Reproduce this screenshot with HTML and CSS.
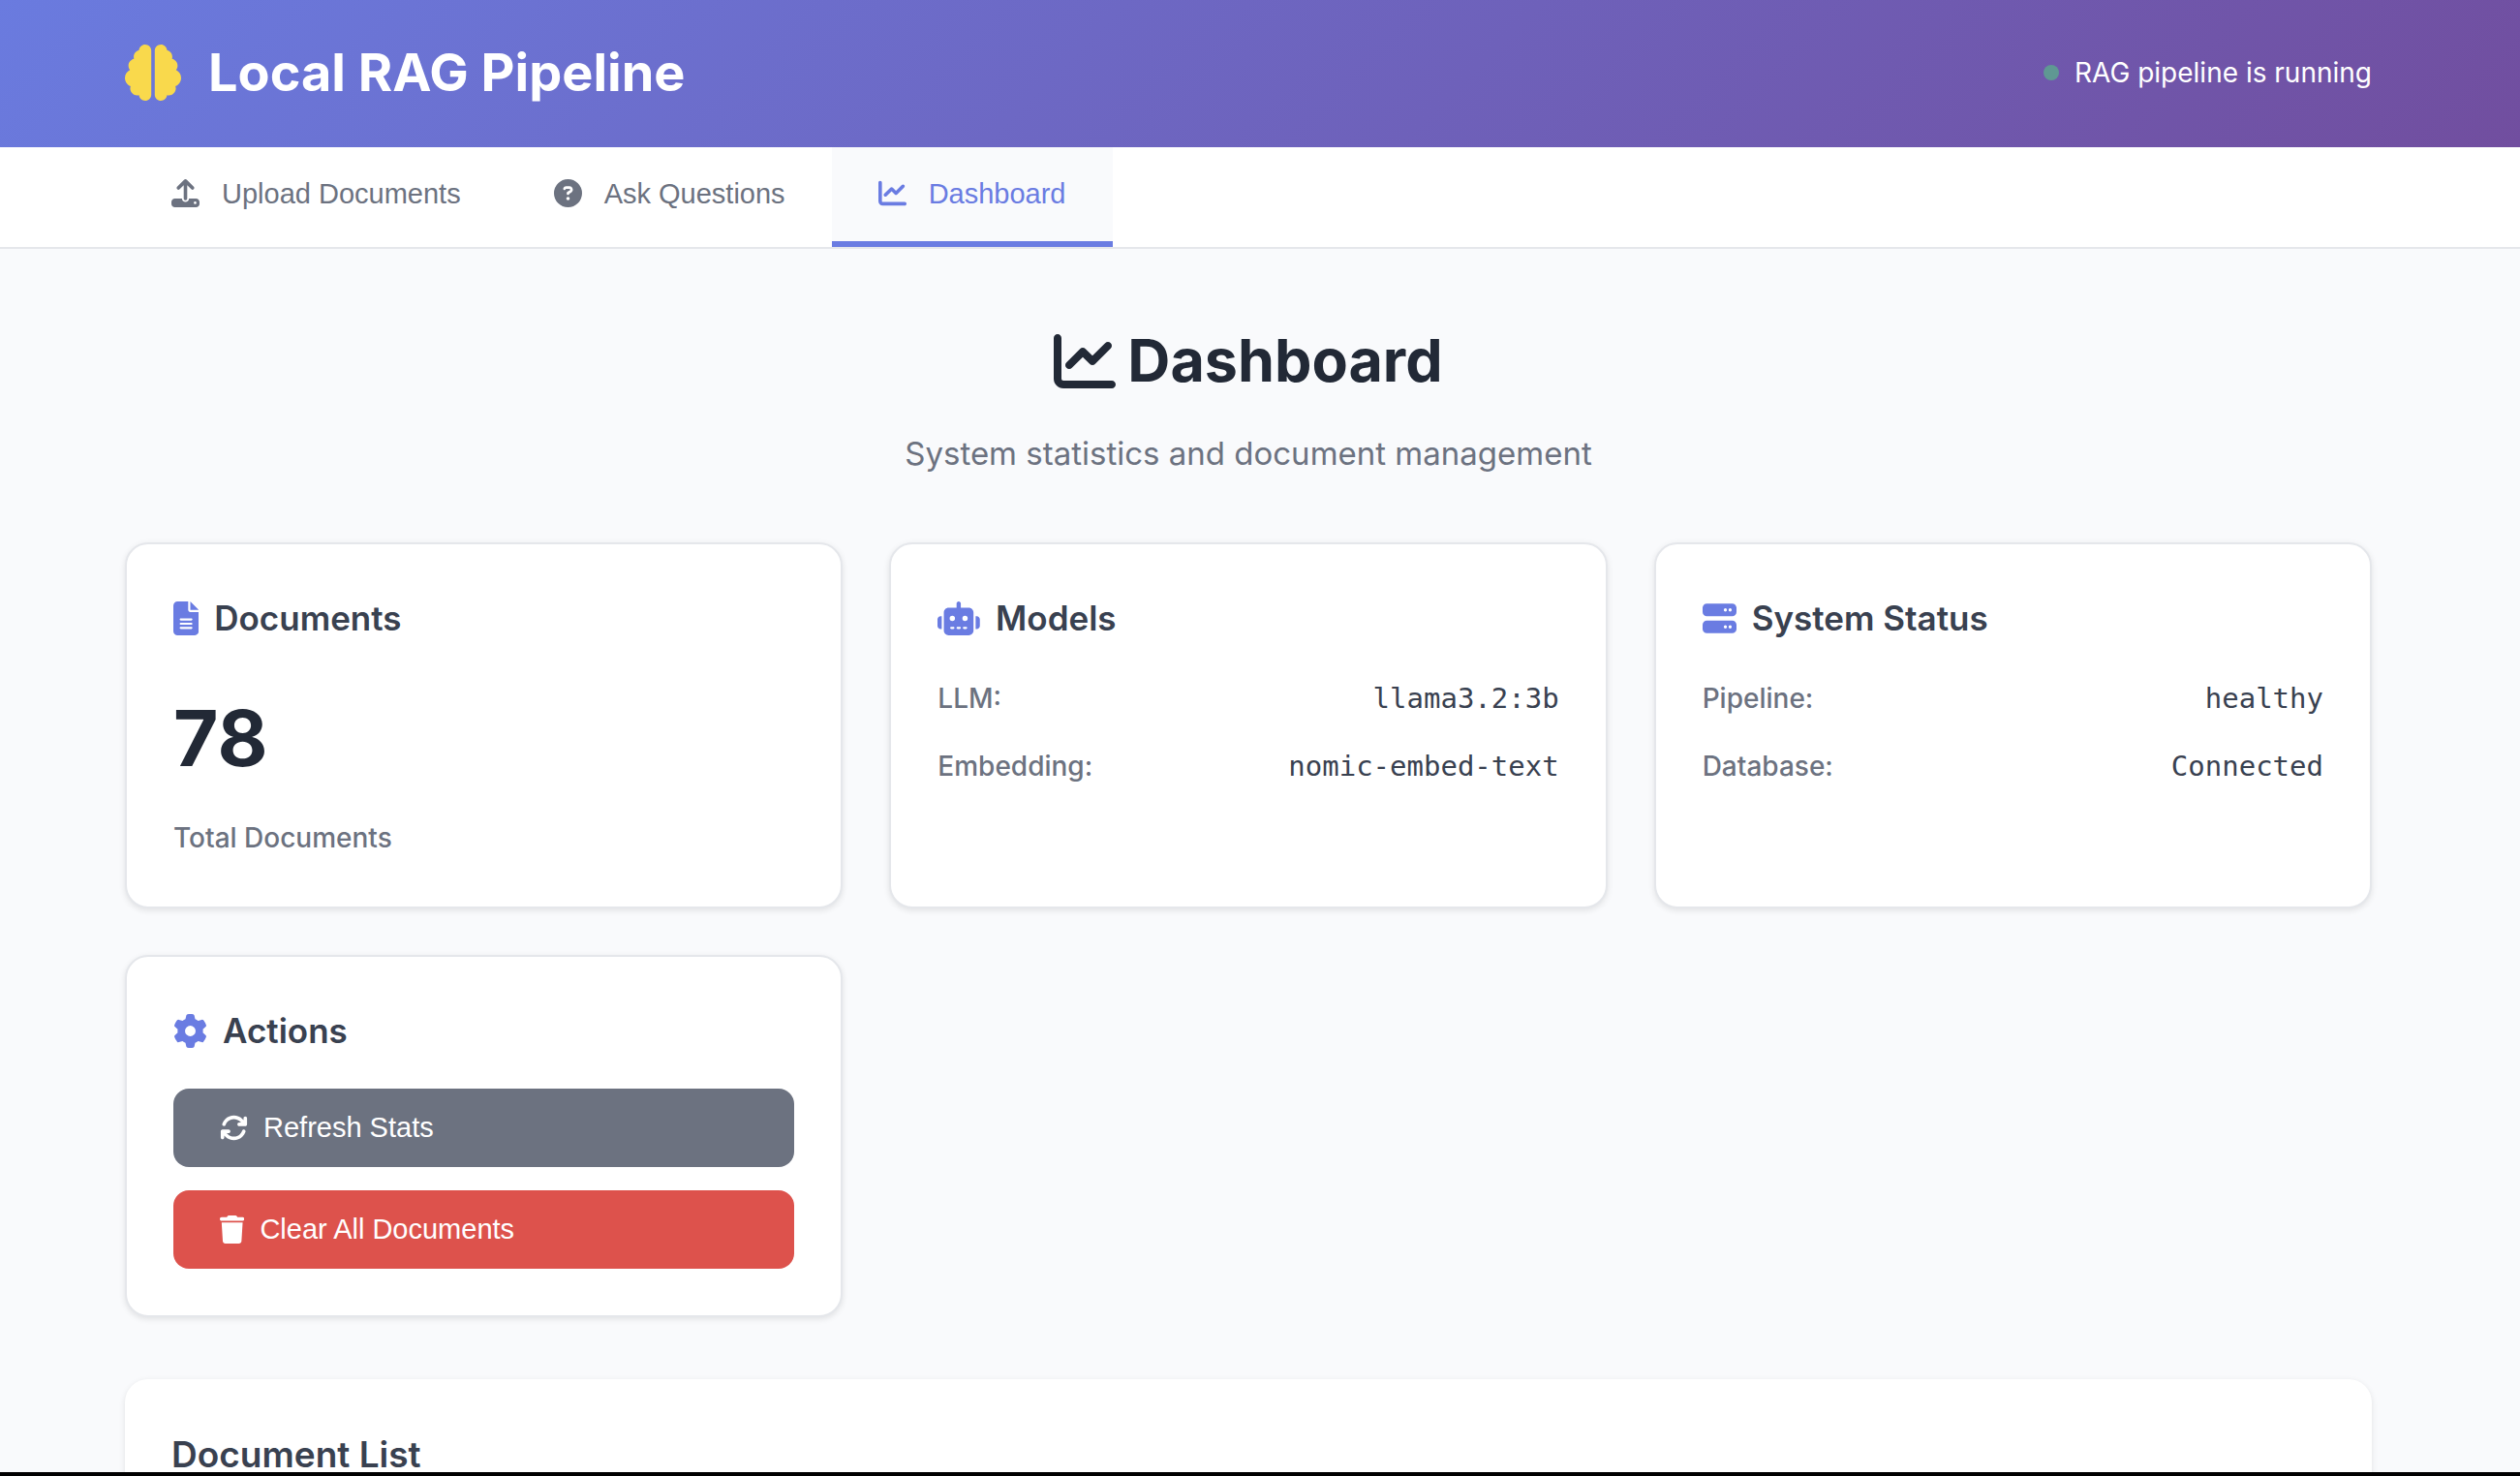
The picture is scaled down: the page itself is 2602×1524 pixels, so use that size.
FILE: index.html
```html
<!DOCTYPE html>
<html lang="en">
<head>
<meta charset="utf-8">
<meta name="viewport" content="width=device-width, initial-scale=1">
<title>Local RAG Pipeline</title>
<link rel="stylesheet" href="styles.css">
</head>
<body>
<div class="app">
  <header class="header">
    <div class="container header-content">
      <div class="logo">
        <svg class="icon" viewBox="0 0 512 512" aria-hidden="true"><path d="M184 0c30.9 0 56 25.1 56 56V456c0 30.9-25.1 56-56 56c-28.9 0-52.7-21.9-55.7-50.1c-5.2 1.4-10.7 2.1-16.3 2.1c-35.3 0-64-28.7-64-64c0-7.4 1.3-14.6 3.6-21.2C21.4 367.4 0 338.2 0 304c0-31.9 18.7-59.5 45.8-72.3C37.1 220.8 32 207 32 192c0-30.7 21.6-56.3 50.4-62.6C80.8 123.9 80 118 80 112c0-29.9 20.6-55.1 48.3-62.1C131.3 21.9 155.1 0 184 0zM328 0c28.9 0 52.6 21.9 55.7 49.9c27.8 7 48.3 32.1 48.3 62.1c0 6-.8 11.9-2.4 17.4c28.8 6.2 50.4 31.9 50.4 62.6c0 15-5.1 28.8-13.8 39.7C493.3 244.5 512 272.1 512 304c0 34.2-21.4 63.4-51.6 74.8c2.3 6.6 3.6 13.8 3.6 21.2c0 35.3-28.7 64-64 64c-5.6 0-11.1-.7-16.3-2.1c-3 28.2-26.8 50.1-55.7 50.1c-30.9 0-56-25.1-56-56V56c0-30.9 25.1-56 56-56z"/></svg>
        <h1 class="logo-text">Local RAG Pipeline</h1>
      </div>
      <div class="status" role="status">
        <span class="status-dot"></span>
        <span>RAG pipeline is running</span>
      </div>
    </div>
  </header>

  <nav class="nav">
    <div class="container nav-content">
      <button class="tab" type="button">
        <svg class="icon" viewBox="0 0 512 512" aria-hidden="true"><path d="M288 109.3V352c0 17.7-14.3 32-32 32s-32-14.3-32-32V109.3l-73.4 73.4c-12.5 12.5-32.8 12.5-45.3 0s-12.5-32.8 0-45.3l128-128c12.5-12.5 32.8-12.5 45.3 0l128 128c12.5 12.5 12.5 32.8 0 45.3s-32.8 12.5-45.3 0L288 109.3zM64 352H192c0 35.3 28.7 64 64 64s64-28.7 64-64H448c35.3 0 64 28.7 64 64v32c0 35.3-28.7 64-64 64H64c-35.3 0-64-28.7-64-64V416c0-35.3 28.7-64 64-64zM432 456a24 24 0 1 0 0-48 24 24 0 1 0 0 48z"/></svg>
        <span>Upload Documents</span>
      </button>
      <button class="tab" type="button">
        <svg class="icon" viewBox="0 0 512 512" aria-hidden="true"><path d="M256 512A256 256 0 1 0 256 0a256 256 0 1 0 0 512zM169.8 165.3c7.9-22.3 29.1-37.3 52.8-37.3h58.3c34.9 0 63.1 28.3 63.1 63.1c0 22.6-12.1 43.5-31.7 54.8L280 264.4c-.2 13-10.9 23.6-24 23.6c-13.3 0-24-10.7-24-24V250.5c0-8.6 4.6-16.5 12.1-20.8l44.3-25.4c4.7-2.7 7.6-7.7 7.6-13.1c0-8.4-6.8-15.1-15.1-15.1H222.6c-3.4 0-6.4 2.1-7.5 5.3l-.4 1.2c-4.4 12.5-18.2 19-30.6 14.6s-19-18.2-14.6-30.6l.4-1.2zM224 352a32 32 0 1 1 64 0 32 32 0 1 1 -64 0z"/></svg>
        <span>Ask Questions</span>
      </button>
      <button class="tab tab-active" type="button">
        <svg class="icon" viewBox="0 0 512 512" aria-hidden="true"><path d="M64 64c0-17.7-14.3-32-32-32S0 46.3 0 64V400c0 44.2 35.8 80 80 80H480c17.7 0 32-14.3 32-32s-14.3-32-32-32H80c-8.8 0-16-7.2-16-16V64zm406.6 86.6c12.5-12.5 12.5-32.8 0-45.3s-32.8-12.5-45.3 0L320 210.7l-57.4-57.4c-12.5-12.5-32.8-12.5-45.3 0l-112 112c-12.5 12.5-12.5 32.8 0 45.3s32.8 12.5 45.3 0L240 221.3l57.4 57.4c12.5 12.5 32.8 12.5 45.3 0l128-128z"/></svg>
        <span>Dashboard</span>
      </button>
    </div>
  </nav>

  <main class="container main">
    <div class="section-header">
      <h2 class="section-title">
        <svg class="icon" viewBox="0 0 512 512" aria-hidden="true"><path d="M64 64c0-17.7-14.3-32-32-32S0 46.3 0 64V400c0 44.2 35.8 80 80 80H480c17.7 0 32-14.3 32-32s-14.3-32-32-32H80c-8.8 0-16-7.2-16-16V64zm406.6 86.6c12.5-12.5 12.5-32.8 0-45.3s-32.8-12.5-45.3 0L320 210.7l-57.4-57.4c-12.5-12.5-32.8-12.5-45.3 0l-112 112c-12.5 12.5-12.5 32.8 0 45.3s32.8 12.5 45.3 0L240 221.3l57.4 57.4c12.5 12.5 32.8 12.5 45.3 0l128-128z"/></svg>
        <span>Dashboard</span>
      </h2>
      <p class="section-subtitle">System statistics and document management</p>
    </div>

    <div class="cards">
      <section class="card">
        <h3 class="card-title">
          <svg class="icon" viewBox="0 0 384 512" aria-hidden="true"><path d="M64 0C28.7 0 0 28.7 0 64V448c0 35.3 28.7 64 64 64H320c35.3 0 64-28.7 64-64V160H256c-17.7 0-32-14.3-32-32V0H64zM256 0V128H384L256 0zM112 256H272c8.8 0 16 7.2 16 16s-7.2 16-16 16H112c-8.8 0-16-7.2-16-16s7.2-16 16-16zm0 64H272c8.8 0 16 7.2 16 16s-7.2 16-16 16H112c-8.8 0-16-7.2-16-16s7.2-16 16-16zm0 64H272c8.8 0 16 7.2 16 16s-7.2 16-16 16H112c-8.8 0-16-7.2-16-16s7.2-16 16-16z"/></svg>
          <span>Documents</span>
        </h3>
        <div class="stat-value">78</div>
        <div class="stat-label">Total Documents</div>
      </section>

      <section class="card">
        <h3 class="card-title">
          <svg class="icon" viewBox="0 0 640 512" aria-hidden="true"><path d="M320 0c17.7 0 32 14.3 32 32V96H472c39.8 0 72 32.2 72 72V440c0 39.8-32.2 72-72 72H168c-39.8 0-72-32.2-72-72V168c0-39.8 32.2-72 72-72H288V32c0-17.7 14.3-32 32-32zM208 384c-8.8 0-16 7.2-16 16s7.2 16 16 16h32c8.8 0 16-7.2 16-16s-7.2-16-16-16H208zm96 0c-8.8 0-16 7.2-16 16s7.2 16 16 16h32c8.8 0 16-7.2 16-16s-7.2-16-16-16H304zm96 0c-8.8 0-16 7.2-16 16s7.2 16 16 16h32c8.8 0 16-7.2 16-16s-7.2-16-16-16H400zM264 256a40 40 0 1 0 -80 0 40 40 0 1 0 80 0zm152 40a40 40 0 1 0 0-80 40 40 0 1 0 0 80zM48 224H64V416H48c-26.5 0-48-21.5-48-48V272c0-26.5 21.5-48 48-48zm544 0c26.5 0 48 21.5 48 48v96c0 26.5-21.5 48-48 48H576V224h16z"/></svg>
          <span>Models</span>
        </h3>
        <dl class="info-list">
          <div class="info-row"><dt>LLM:</dt><dd>llama3.2:3b</dd></div>
          <div class="info-row"><dt>Embedding:</dt><dd>nomic-embed-text</dd></div>
        </dl>
      </section>

      <section class="card">
        <h3 class="card-title">
          <svg class="icon" viewBox="0 0 512 512" aria-hidden="true"><path d="M64 32C28.7 32 0 60.7 0 96v64c0 35.3 28.7 64 64 64H448c35.3 0 64-28.7 64-64V96c0-35.3-28.7-64-64-64H64zm280 72a24 24 0 1 1 0 48 24 24 0 1 1 0-48zm48 24a24 24 0 1 1 48 0 24 24 0 1 1 -48 0zM64 288c-35.3 0-64 28.7-64 64v64c0 35.3 28.7 64 64 64H448c35.3 0 64-28.7 64-64V352c0-35.3-28.7-64-64-64H64zm280 72a24 24 0 1 1 0 48 24 24 0 1 1 0-48zm48 24a24 24 0 1 1 48 0 24 24 0 1 1 -48 0z"/></svg>
          <span>System Status</span>
        </h3>
        <dl class="info-list">
          <div class="info-row"><dt>Pipeline:</dt><dd>healthy</dd></div>
          <div class="info-row"><dt>Database:</dt><dd>Connected</dd></div>
        </dl>
      </section>

      <section class="card">
        <h3 class="card-title">
          <svg class="icon" viewBox="0 0 512 512" aria-hidden="true"><path d="M495.9 166.6c3.2 8.7 .5 18.4-6.4 24.6l-43.3 39.4c1.1 8.3 1.7 16.8 1.7 25.4s-.6 17.1-1.7 25.4l43.3 39.4c6.9 6.2 9.6 15.9 6.4 24.6c-4.4 11.9-9.7 23.3-15.8 34.3l-4.7 8.1c-6.6 11-14 21.4-22.1 31.2c-5.9 7.2-15.7 9.6-24.5 6.8l-55.7-17.7c-13.4 10.3-28.2 18.9-44 25.4l-12.5 57.1c-2 9.1-9 16.3-18.2 17.8c-13.8 2.3-28 3.5-42.5 3.5s-28.7-1.2-42.5-3.5c-9.2-1.5-16.2-8.7-18.2-17.8l-12.5-57.1c-15.8-6.5-30.6-15.1-44-25.4L83.1 425.9c-8.8 2.8-18.6 .3-24.5-6.8c-8.1-9.8-15.5-20.2-22.1-31.2l-4.7-8.1c-6.1-11-11.4-22.4-15.8-34.3c-3.2-8.7-.5-18.4 6.4-24.6l43.3-39.4C64.6 273.1 64 264.6 64 256s.6-17.1 1.7-25.4L22.4 191.2c-6.9-6.2-9.6-15.9-6.4-24.6c4.4-11.9 9.7-23.3 15.8-34.3l4.7-8.1c6.6-11 14-21.4 22.1-31.2c5.9-7.2 15.7-9.6 24.5-6.8l55.7 17.7c13.4-10.3 28.2-18.9 44-25.4l12.5-57.1c2-9.1 9-16.3 18.2-17.8C227.3 1.2 241.5 0 256 0s28.7 1.2 42.5 3.5c9.2 1.5 16.2 8.7 18.2 17.8l12.5 57.1c15.8 6.5 30.6 15.1 44 25.4l55.7-17.7c8.8-2.8 18.6-.3 24.5 6.8c8.1 9.8 15.5 20.2 22.1 31.2l4.7 8.1c6.1 11 11.4 22.4 15.8 34.3zM256 336a80 80 0 1 0 0-160 80 80 0 1 0 0 160z"/></svg>
          <span>Actions</span>
        </h3>
        <div class="actions">
          <button class="btn btn-secondary" type="button">
            <svg class="icon" viewBox="0 0 512 512" aria-hidden="true"><path d="M105.1 202.6c7.7-21.8 20.2-42.3 37.8-59.8c62.5-62.5 163.8-62.5 226.3 0L386.3 160H352c-17.7 0-32 14.3-32 32s14.3 32 32 32H463.9c17.7 0 32-14.3 32-32V80c0-17.7-14.3-32-32-32s-32 14.3-32 32v35.2L414.4 97.6c-87.5-87.5-229.3-87.5-316.8 0C73.2 122 55.6 150.7 44.8 181.4c-5.9 16.7 2.9 34.9 19.5 40.8s34.9-2.9 40.8-19.5zM39 289.3c-5 1.5-9.8 4.2-13.7 8.2c-4 4-6.7 8.8-8.1 14c-.3 1.2-.6 2.5-.8 3.8c-.3 1.7-.4 3.4-.4 5.1V432c0 17.7 14.3 32 32 32s32-14.3 32-32V396.9l17.6 17.5c87.5 87.4 229.3 87.4 316.7 0c24.4-24.4 42.1-53.1 52.9-83.7c5.9-16.7-2.9-34.9-19.5-40.8s-34.9 2.9-40.8 19.5c-7.7 21.8-20.2 42.3-37.8 59.8c-62.5 62.5-163.8 62.5-226.3 0l-.1-.1L125.6 352H160c17.7 0 32-14.3 32-32s-14.3-32-32-32H48.4c-1.6 0-3.2 .1-4.8 .3s-3.1 .5-4.6 1z"/></svg>
            <span>Refresh Stats</span>
          </button>
          <button class="btn btn-danger" type="button">
            <svg class="icon" viewBox="0 0 448 512" aria-hidden="true"><path d="M135.2 17.7L128 32H32C14.3 32 0 46.3 0 64S14.3 96 32 96H416c17.7 0 32-14.3 32-32s-14.3-32-32-32H320l-7.2-14.3C307.4 6.8 296.3 0 284.2 0H163.8c-12.1 0-23.2 6.8-28.6 17.7zM416 128H32L53.2 467c1.6 25.3 22.6 45 47.9 45H346.9c25.3 0 46.3-19.7 47.9-45L416 128z"/></svg>
            <span>Clear All Documents</span>
          </button>
        </div>
      </section>
    </div>

    <section class="documents">
      <h3 class="documents-title">Document List</h3>
    </section>
  </main>
</div>
</body>
</html>
```
FILE: styles.css
```css
:root {
  --accent: #6a7ce2;
  --ink: #222936;
  --heading: #394150;
  --muted: #6c7280;
  --line: #e5e7eb;
  --page: #f9fafc;
  --scrollbar: 24px;
}

* {
  box-sizing: border-box;
  margin: 0;
  padding: 0;
}

body {
  background: var(--page);
  color: var(--heading);
  font-family: Inter, "Liberation Sans", sans-serif;
  font-size: 28px;
  line-height: 46px;
}

/* The window clips the page just above its dark bottom edge. */
.app {
  height: 100vh;
  overflow: hidden;
  border-bottom: 4px solid #000;
}

.icon {
  flex: none;
  height: 1em;
  fill: currentColor;
}

.header,
.nav,
.main {
  padding-right: var(--scrollbar);
}

.container {
  width: 100%;
  max-width: 2400px;
  margin: 0 auto;
  padding: 0 40px;
}

.header {
  background: linear-gradient(135deg, #6a7bdf 0%, #714e9f 100%);
  color: #fff;
}

.header-content {
  display: flex;
  align-items: center;
  justify-content: space-between;
  min-height: 152px;
  padding-bottom: 2px;
}

.logo {
  display: flex;
  align-items: center;
  gap: 28px;
  font-size: 58px;
}

.logo .icon {
  color: #f9d94c;
}

.logo-text {
  font-size: 54px;
  font-weight: 700;
  line-height: 92px;
}

.status {
  display: flex;
  align-items: center;
  gap: 16px;
}

.status-dot {
  width: 16px;
  height: 16px;
  border-radius: 50%;
  background: #5f9893;
}

.nav {
  background: #fff;
  border-bottom: 2px solid var(--line);
}

.nav-content {
  display: flex;
}

.tab {
  display: flex;
  align-items: center;
  gap: 23px;
  height: 103px;
  padding: 0 48px 2px;
  border: 0;
  border-bottom: 6px solid transparent;
  background: none;
  color: var(--muted);
  font: 29px/32px "Liberation Sans", Arial, sans-serif;
}

.tab-active {
  border-bottom-color: var(--accent);
  background: var(--page);
  color: var(--accent);
}

.main {
  max-width: 2424px;
  padding: 64px 64px 0 40px;
}

.section-header {
  margin-bottom: 64px;
  text-align: center;
}

.section-title {
  display: flex;
  align-items: center;
  justify-content: center;
  gap: 12px;
  margin-bottom: 16px;
  color: var(--ink);
  font-size: 61px;
  font-weight: 700;
  line-height: 103px;
}

.section-title .icon {
  height: 64px;
}

.section-subtitle {
  color: var(--muted);
  font-size: 33px;
  line-height: 56px;
}

.cards {
  display: grid;
  grid-template-columns: repeat(3, 1fr);
  gap: 48px;
  margin-bottom: 64px;
}

.card {
  padding: 48px;
  border: 2px solid var(--line);
  border-radius: 24px;
  background: #fff;
  box-shadow: 0 2px 6px rgba(0, 0, 0, 0.1);
}

.card-title {
  display: flex;
  align-items: center;
  gap: 16px;
  margin-bottom: 32px;
  font-size: 35px;
  font-weight: 600;
  line-height: 56px;
}

.card-title .icon {
  color: var(--accent);
}

.stat-value {
  margin-bottom: 16px;
  color: var(--ink);
  font-size: 80px;
  font-weight: 700;
  line-height: 128px;
}

.stat-label,
.info-row dt {
  color: var(--muted);
  font-weight: 500;
}

.info-list {
  display: grid;
  gap: 24px;
}

.info-row {
  display: flex;
  justify-content: space-between;
}

.info-row dd {
  font-family: "DejaVu Sans Mono", monospace;
  font-size: 29px;
}

.actions {
  display: grid;
  gap: 24px;
}

.btn {
  display: flex;
  align-items: center;
  gap: 16px;
  padding: 24px 48px;
  border: 0;
  border-radius: 16px;
  color: #fff;
  font: 29px/33px "Liberation Sans", Arial, sans-serif;
}

.btn-secondary {
  background: var(--muted);
}

.btn-danger {
  background: #dd524c;
}

.documents {
  padding: 48px;
  border-radius: 24px;
  background: #fff;
  box-shadow: 0 2px 6px rgba(0, 0, 0, 0.1);
}

.documents-title {
  font-size: 37px;
  font-weight: 600;
  line-height: 60px;
}
```
